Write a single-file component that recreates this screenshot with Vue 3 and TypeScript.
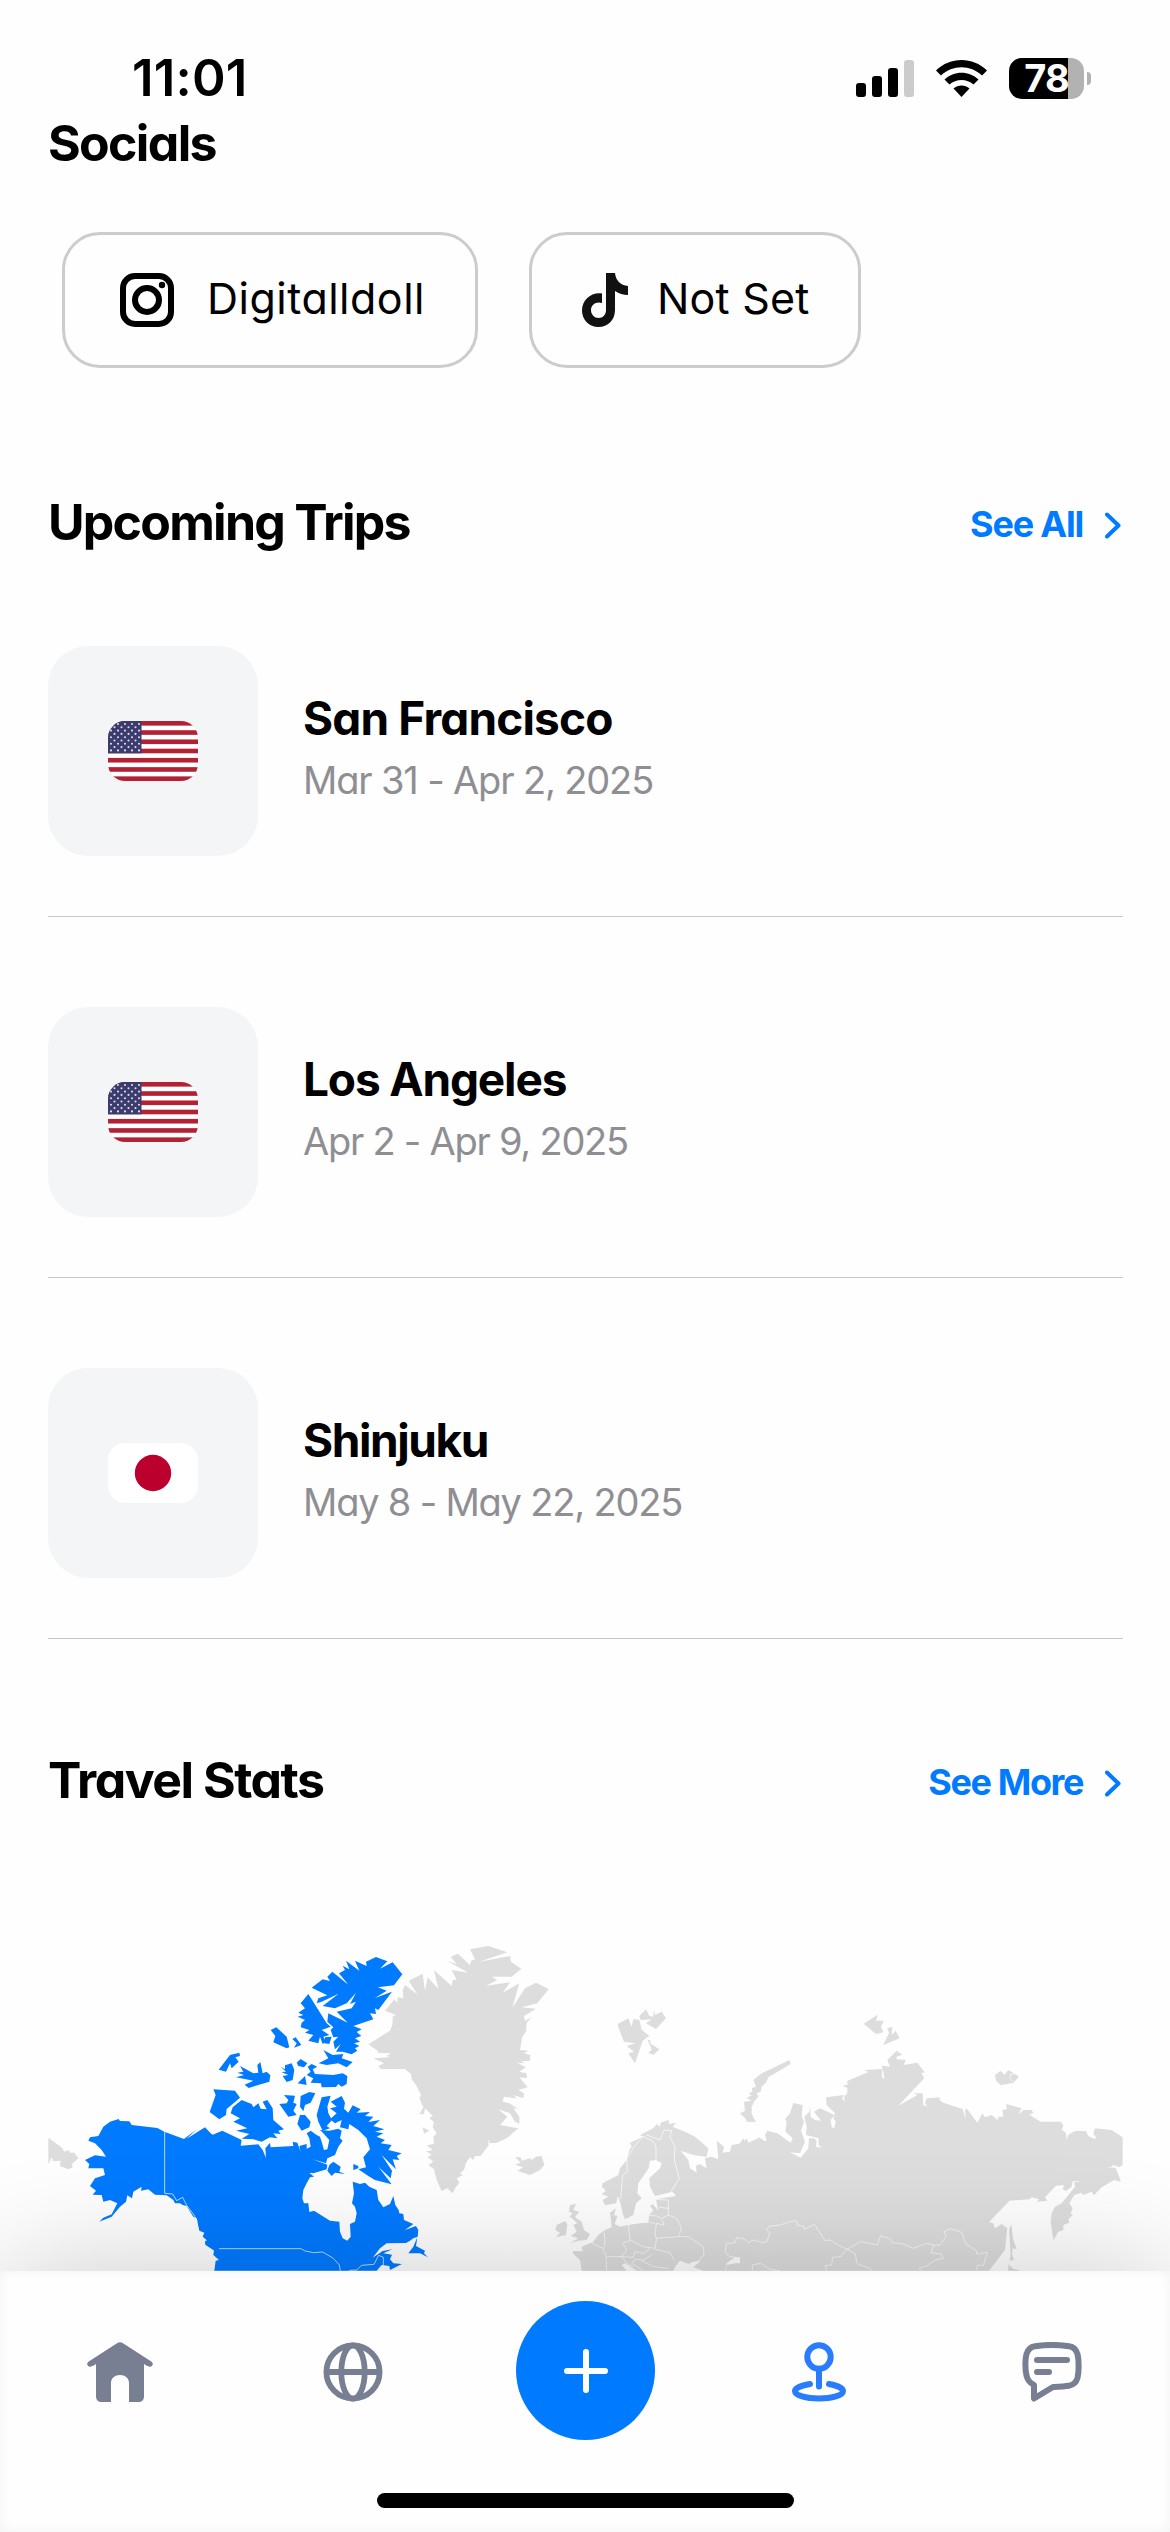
<script setup lang="ts">
interface Trip {
  id: number
  city: string
  dates: string
  country: 'us' | 'jp'
  citySpacing: string
  dateSpacing: string
}

const trips: Trip[] = [
  { id: 1, city: 'San Francisco', dates: 'Mar 31 - Apr 2, 2025', country: 'us', citySpacing: '-0.85px', dateSpacing: '-1.15px' },
  { id: 2, city: 'Los Angeles', dates: 'Apr 2 - Apr 9, 2025', country: 'us', citySpacing: '-1.15px', dateSpacing: '-1.25px' },
  { id: 3, city: 'Shinjuku', dates: 'May 8 - May 22, 2025', country: 'jp', citySpacing: '-1.4px', dateSpacing: '-1.2px' },
]

const stripes = [0, 2, 4, 6, 8, 10, 12]

const stars: { x: number; y: number }[] = []
for (let row = 0; row < 9; row++) {
  const count = row % 2 === 0 ? 5 : 4
  for (let col = 0; col < count; col++) {
    stars.push({ x: 3 + col * 7 + (row % 2 ? 3.5 : 0), y: 3 + row * 3.3 })
  }
}

// North America: coordinates are thirds of a pixel
const visited: string[] = [
  'M236 597L240 603L268 604L275 615L352 624L373 635L432 657L470 628L440 656L495 622L512 640L518 644L547 632L605 660L602 677L655 673L668 690L678 714L676 685L690 668L692 682L720 680L760 678L758 665L772 668L782 695L778 678L800 672L800 686L812 680L808 655L800 640L812 632L830 645L840 650L845 665L852 690L862 688L868 660L850 640L840 630L868 632L895 626L905 632L900 655L908 662L895 680L885 705L862 715L858 730L816 717L862 734L860 748L820 760L808 758L822 770L810 772L800 790L790 810L787 835L792 850L805 850L808 876L822 872L870 902L898 905L900 935L908 955L922 962L932 950L930 912L945 905L950 880L945 860L936 850L942 820L938 785L960 792L975 788L988 800L1010 810L1015 840L1030 862L1050 852L1060 828L1066 855L1076 870L1078 880L1090 882L1092 900L1120 912L1095 930L1128 918L1135 930L1133 950L1120 955L1110 962L1098 969L1040 970L1020 985L998 1013L1028 993L1057 988L1030 1000L1056 1004L1050 1018L1060 1030L1086 1032L1050 1050L1048 1038L1025 1035L1010 1052L523 1052L527 1022L537 1020L520 1005L522 990L495 972L500 960L488 950L493 938L478 932L470 895L460 890L440 858L428 855L420 850L405 850L400 840L380 826L345 824L325 808L303 812L305 800L280 815L276 835L262 826L258 845L240 860L215 890L178 905L190 893L215 883L232 850L210 840L190 845L185 825L158 824L168 812L150 798L165 775L195 765L190 745L145 745L148 732L135 720L165 706L198 710L185 690L165 670L145 662L150 652L175 648L190 620L210 605Z',
  'M1008 111L1042 124L1020 146L1058 127L1087 163L1062 196L1014 202L1040 212L1005 234L1056 215L1015 270L1005 265L1008 282L990 280L1000 298L940 318L965 328L950 336L964 348L945 355L960 365L942 370L958 378L945 385L952 392L935 403L908 395L888 395L902 372L885 388L880 365L895 350L880 352L872 330L880 322L862 305L865 280L923 308L890 275L935 265L948 245L930 252L948 218L920 250L885 265L848 258L896 221L845 245L830 250L835 235L862 226L815 203L848 178L870 183L862 170L877 155L925 194L897 160L915 150L908 137L928 148L918 122L958 152L945 122L980 138L978 125Z',
  'M805 222L860 310L872 320L845 330L868 345L850 350L858 365L848 372L840 350L835 370L805 362L820 345L795 338L808 330L782 322L785 308L795 300L773 290L790 285L775 278L795 265L782 250Z',
  'M692 330L709 322L740 350L748 382L740 385L700 367L706 348Z',
  'M757 357L767 352L784 375L762 383L770 370Z',
  'M855 352L875 350L868 372L853 370Z',
  'M536 449L570 405L598 398L600 408L586 412L596 425L575 445L570 430L558 455Z',
  'M600 438L640 460L655 458L652 435L661 426L668 460L680 455L691 466L688 485L626 504L614 494L640 482L588 472L612 465L592 458L610 455Z',
  'M722 440L735 448L735 436L755 430L763 450L758 480L740 486L728 468L745 465L724 456L738 455Z',
  'M770 428L782 417L802 430L792 442L775 438Z',
  'M773 490L795 468L800 495Z',
  'M803 440L815 432L832 440L818 448L825 462L880 465L908 460L922 468L920 492L905 500L895 492L888 501L845 502L843 490L812 488L820 475L800 465L812 455Z',
  'M836 430L865 415L850 390L878 405L910 402L905 415L938 426L920 442L895 430L860 435Z',
  'M520 508L585 512L600 533L560 567L558 585L538 598L509 576L527 525Z',
  'M605 540L635 552L640 562L655 550L662 566L680 568L668 545L682 540L698 565L700 600L732 628L715 632L722 642L700 640L712 655L690 652L665 665L640 658L605 656L628 642L588 632L622 625L580 605L600 595L572 580L578 562Z',
  'M732 525L765 527L760 548L770 552L760 572L770 585L745 590L718 552L740 550L745 540Z',
  'M782 528L808 516L826 520L812 548L795 555L790 574L780 560Z',
  'M845 532L872 527L862 560L865 580L876 600L860 618L870 625L848 632L835 605L830 585Z',
  'M780 585L795 585L812 605L808 622L785 632L772 612Z',
  'M872 545L905 528L915 548L912 566L925 578L938 556L962 568L950 578L990 576L975 588L1000 590L985 606L1020 600L1000 618L1033 628L1005 635L1030 640L1010 650L1035 660L1022 670L1055 675L1045 690L1085 700L1070 708L1078 720L1058 718L1068 748L1025 705L1056 752L1052 775L1015 740L1055 793L1005 780L985 768L955 748L978 742L970 712L990 688L980 655L955 630L928 612L925 628L900 622L905 600L885 610L870 598L890 580L870 565L890 560Z',
  'M868 735L880 725L902 740L898 755L915 762L885 758L875 768L862 752Z',
  'M940 732L955 738L955 745L940 750Z',
  'M1132 952L1128 978L1155 992L1152 1000L1164 1012L1140 1000L1105 1000L1120 980Z',
  'M495 962L520 968L540 990L538 1008L520 990L497 975Z',
]

const visitedBorders: string[] = [
  'M374 635V820L398 822L410 842L428 832L440 856L462 885L472 905',
  'M537 986H783L795 993L820 998L848 996L880 1015L898 1035L901 1052',
  'M928 1051L950 1050L965 1036L1002 1033L1016 1006L1030 1012V1038',
]

const westLand = 'M25 653L68 685L72 695L85 690L92 698L103 698L115 715L95 733L98 742L85 748L60 738L62 722L40 724L35 712L25 733Z'

// Greenland, Iceland, the British Isles and Europe
const atlanticLand: string[] = [
  'M385 78L442 97L358 125L450 108L453 125L484 146L455 170L395 170L412 180L378 197L450 187L428 218L478 190L457 263L495 205L528 188L566 207L532 250L485 262L528 266L492 288L495 302L515 292L500 308L498 335L487 350L480 390L505 392L492 400L511 405L510 422L482 424L495 430L472 428L497 442L478 455L500 460L500 475L478 472L503 502L475 510L492 520L490 535L460 525L470 535L432 530L428 545L448 550L475 568L460 565L478 590L478 612L465 605L450 580L415 568L442 590L420 615L475 625L440 655L410 668L390 670L385 658L386 676L362 708L345 708L340 720L330 712L318 728L312 750L300 760L308 765L290 775L298 788L288 800L278 820L262 805L245 813L230 780L222 748L205 735L220 725L203 712L215 704L198 694L218 690L200 676L222 672L220 650L230 640L218 622L222 606L208 595L218 588L195 565L192 582L178 583L190 562L178 535L183 525L170 498L155 478L153 462L134 447L62 447L55 438L72 430L40 415L90 412L80 408L92 400L52 398L55 394L25 373L90 332L97 315L98 290L108 285L75 272L103 238L112 248L113 232L130 235L128 210L135 195L172 223L146 182L188 161L195 212L203 172L235 206L222 150L275 198L278 180L290 180L275 150L325 158L262 123L290 132L272 110L294 101L330 136L333 122L345 118L330 88Z',
  'M188 622L208 632L192 641Z',
  'M466 712L482 712L485 722L510 715L515 720L528 710L545 708L553 735L540 750L510 765L472 752L490 742L465 734L482 728Z',
  'M630 855L648 852L640 870L658 875L645 892L665 905L672 930L690 942L680 960L655 962L630 970L655 955L632 948L650 935L640 915L652 910L636 895L628 890L638 880L627 875Z',
  'M590 915L615 903L622 912L618 945L588 952L600 938L586 930Z',
  'M773 312L805 295L815 320L820 297L838 300L845 330L868 347L848 362L825 430L805 400L822 395L800 378L825 370L792 365L778 330Z',
  'M838 288L858 268L868 288L880 290L882 268L885 285L905 275L918 295L888 327L858 310L875 298L842 300Z',
  'M862 358L872 362L870 370L898 388L880 405L865 398L875 390L872 380Z',
  'M925 600L928 612L948 608L938 620L975 635L1005 650L1045 685L1040 710L1000 705L962 692L985 720L990 745L1010 758L1008 738L1018 732L1040 745L1035 715L1055 710L1075 718L1070 662L1092 680L1088 698L1110 695L1115 675L1150 668L1160 655L1165 668L1200 652V1052H1098L1100 1035L1125 1030L1150 1030L1148 1012L1125 1012L1100 1030L1096 1052H1030L1000 1042L1022 1022L1000 1025L985 1032L960 1022L945 1040L940 1052H830L812 1040L795 1030L785 1035L800 1052H665L660 1020L638 1000L640 993L668 994L665 980L700 965L715 945L735 930L755 922L752 890L750 878L768 865L762 885L772 888L764 912L780 920L805 915L840 910L865 908L868 885L880 870L870 858L878 852L895 872L888 838L925 832L948 828L938 815L885 828L870 800L868 775L900 745L905 730L888 720L870 722L866 745L835 790L832 820L845 835L828 850L820 885L795 898L788 880L782 852L774 828L768 850L735 856L728 840L745 830L725 822L738 812L725 800L728 790L775 765L780 745L800 720L808 690L815 680L810 668L850 650L840 645L880 625L890 612L900 620L902 608Z',
]

const europeBorders: string[] = [
  'M782 838L788 765L802 755L800 715L830 670L852 650L880 665L888 680V722',
  'M860 645L900 660L912 630L935 632L930 650L945 680L943 720L958 775L930 820',
  'M888 838L925 840V885L905 895L890 888L868 886',
  'M898 862L925 865M925 885L950 895L965 925L955 950L888 955L885 935L890 910L912 915L905 895',
  'M885 912L868 905M805 915L810 960L850 980L885 985L890 955',
  'M732 935L735 965L730 990L740 1010L785 1010L800 990L788 970L810 962',
  'M690 965L720 982L730 985M785 1010L820 1012L825 995L850 1000L870 985',
  'M955 950L985 950L1030 980L1032 1005L1015 1022M875 1005L850 1020L825 1018L815 1030L850 1052',
  'M885 988L930 998L942 1020M845 1022L880 1040L925 1045M738 1010L740 1052M785 1010L800 1030L820 1040',
  'M1128 1012L1108 1010L1095 995L1100 970L1125 968L1130 952L1165 965L1170 955L1200 955',
]

// Northern Asia
const asiaLand: string[] = [
  'M0 668L10 655L18 668L28 670L65 655L70 662L80 662L75 645L82 632L112 640L152 668L158 655L136 635L140 605L135 598L150 580L160 549L188 555L185 590L192 605L183 632L195 665L180 700L150 697L182 713L205 685L207 655L222 655L230 662L228 680L245 683L236 675L235 655L198 645L200 620L193 590L208 575L210 557L212 590L225 600L243 602L222 575L240 565L283 585L272 600L275 622L282 625L287 605L280 595L285 580L260 555L258 532L312 525L306 535L315 547L312 530L322 520L322 505L308 495L322 495L322 483L385 456L372 450L427 447L425 470L433 478L430 455L425 437L450 440L442 420L470 392L487 404L470 410L470 418L498 420L490 435L532 428L555 458L543 458L553 475L475 557L532 525L520 520L548 520L550 555L563 560L555 550L560 535L600 532L598 540L610 548L668 567L677 598L675 568L682 568L712 608L727 580L735 592L755 585L773 600L775 590L790 590L787 570L800 568L798 552L845 565L835 582L852 570L875 570L880 578L868 584L902 605L962 605L970 615L966 630L978 638L980 660L984 645L1005 633L1038 633L1045 648L1065 657L1068 652L1060 642L1065 625L1115 630L1148 652V735L1138 742L1120 735L1115 740L1098 742L1127 743L1143 785L1122 780L1085 802L1062 826L1055 815L1028 825L1025 818L1003 825L988 850L998 865L992 880L998 885L985 898L988 908L970 915L970 930L955 935L940 960L932 905L935 880L945 860L965 850L1005 800L1003 787L1025 784L998 784L995 800L978 813L968 808L972 795L948 797L915 832L922 842L890 845L897 838L875 832L868 838L808 842L747 907L760 910L765 925L785 912L802 925L795 990L747 1052H0Z',
  'M814 913L820 960L830 988L818 985L816 1005L822 1020L810 1022L812 1000L807 930Z',
  'M805 1033L820 1047L837 1050V1052H805Z',
  'M148 420L152 432L85 472L78 488L65 500L62 515L50 520L55 530L42 545L35 560L35 582L48 606L20 605L18 598L0 580L15 572L12 545L35 542L20 535L35 525L25 520L38 515L35 505L48 500L40 480L65 460Z',
  'M371 311L413 284L408 302L431 302L423 320L430 337L408 342Z',
  'M442 325L457 320L455 345L467 332L479 355L429 376L447 340Z',
  'M765 465L782 452L793 465L805 450L837 470L820 488L783 496L768 482Z',
]

const asiaBorders: string[] = [
  'M0 953L15 958L25 968L40 960L65 968L80 965L90 940L80 930L88 918L120 915L160 902L172 905V916L192 918V928L224 913L255 962L270 960L300 978L322 988L362 965L412 975L422 947L452 957L455 968L485 971L520 985L560 970L582 976L600 975L618 950L612 935L630 926L665 937L678 972L710 993V1002L742 997L730 1037L712 1035L710 1052',
  'M322 988L345 1000L352 1032L390 1045L395 1052M322 985L302 1010L278 1012L275 1035L255 1037L260 1052',
  'M582 976L573 998L603 1002L610 1015L585 1020L560 1038L538 1045L542 1052',
  'M37 1052V1035L62 1030L90 1048L120 1052M822 462L812 462L810 475L818 484',
]
</script>

<template>
  <div class="screen">
    <header class="status-bar">
      <span class="clock">11:01</span>
      <div class="status-icons">
        <svg class="signal" viewBox="0 0 58 37">
          <rect x="0" y="23" width="10" height="14" rx="3" />
          <rect x="16" y="16" width="10" height="21" rx="3" />
          <rect x="32" y="8" width="10" height="29" rx="3" />
          <rect x="48" y="0" width="10" height="37" rx="3" fill="#ccc" />
        </svg>
        <svg class="wifi" viewBox="0 0 51 37">
          <path d="M0 10.5C14-3.5 37-3.5 51 10.5L46 15.5C34.500 4.500 16.500 4.500 5 15.500Z" />
          <path d="M8.500 19.500C18 10.500 33 10.500 42.500 19.500L37.500 24.500C31 18.500 20 18.500 13.500 24.500Z" />
          <path d="M17.500 28.500C22 24.500 29 24.500 33.500 28.500L25.500 37Z" />
        </svg>
        <div class="battery">
          <div class="battery-body"><span>78</span></div>
          <div class="battery-tip"></div>
        </div>
      </div>
    </header>

    <main>
      <h2 class="title socials-title">Socials</h2>
      <div class="socials">
        <button class="social instagram">
          <svg viewBox="0 0 54 54" width="54" height="54" fill="none" stroke="#000" stroke-width="6">
            <rect x="3" y="3" width="48" height="48" rx="12" />
            <circle cx="27" cy="27" r="12" />
            <circle cx="42" cy="12" r="3.200" fill="#000" stroke="none" />
          </svg>
          <span>Digitalldoll</span>
        </button>
        <button class="social tiktok">
          <svg viewBox="0 0 46 54" width="46" height="54">
            <path fill="#111" d="M24 0H33C33.500 7 38.500 12.500 46 13V22C41 22 37 20.500 33 18V37C33 47 26 54 16.500 54C7 54 0 46.500 0 37.500C0 27 9 19 20 20.500V30C14 28 9 32 9 37C9 41.500 12.500 45 16.500 45C21 45 24 41.500 24 37Z" />
          </svg>
          <span>Not Set</span>
        </button>
      </div>

      <section class="trips">
        <div class="section-head">
          <h2 class="title trips-title">Upcoming Trips</h2>
          <a class="more"><span class="see-all">See All</span>
            <svg viewBox="0 0 16 27" width="16" height="27"><path d="M2 2.500L13.500 13.500L2 24.500" /></svg>
          </a>
        </div>
        <article v-for="trip in trips" :key="trip.id" class="trip">
          <div class="tile">
            <svg v-if="trip.country === 'us'" class="flag" viewBox="0 0 90 60">
              <rect width="90" height="60" fill="#fff" />
              <rect v-for="s in stripes" :key="s" y="0" :transform="`translate(0 ${s * 4.615})`" width="90" height="4.615" fill="#b22234" />
              <rect width="33.500" height="32.300" fill="#3c3b6e" />
              <circle v-for="(star, i) in stars" :key="i" :cx="star.x" :cy="star.y" r="1.050" fill="#dcdce8" />
            </svg>
            <svg v-else class="flag" viewBox="0 0 90 60">
              <rect width="90" height="60" fill="#fff" />
              <circle cx="45" cy="30" r="18.200" fill="#bc002d" />
            </svg>
          </div>
          <div class="trip-text">
            <h3 :style="{ letterSpacing: trip.citySpacing }">{{ trip.city }}</h3>
            <p :style="{ letterSpacing: trip.dateSpacing }">{{ trip.dates }}</p>
          </div>
        </article>
      </section>

      <section class="stats">
        <div class="section-head">
          <h2 class="title stats-title">Travel Stats</h2>
          <a class="more"><span class="see-more">See More</span>
            <svg viewBox="0 0 16 27" width="16" height="27"><path d="M2 2.500L13.500 13.500L2 24.500" /></svg>
          </a>
        </div>
        <svg class="map" viewBox="48 1920 1075 351">
          <g transform="translate(360 1920) scale(.33333)">
            <path v-for="d in atlanticLand" :key="d" :d="d" class="land" />
            <path v-for="d in europeBorders" :key="d" :d="d" class="border" />
          </g>
          <g transform="translate(740 1920) scale(.33333)">
            <path v-for="d in asiaLand" :key="d" :d="d" class="land" />
            <path v-for="d in asiaBorders" :key="d" :d="d" class="border" />
          </g>
          <g transform="translate(40 1920) scale(.33333)">
            <path :d="westLand" class="land" />
            <path v-for="d in visited" :key="d" :d="d" class="visited" />
            <path v-for="d in visitedBorders" :key="d" :d="d" class="border" />
          </g>
        </svg>
      </section>
    </main>

    <nav class="tab-bar">
      <div class="tabs">
        <a class="tab">
          <svg viewBox="0 0 66 60" width="66" height="60">
            <path fill="#787f92" d="M30 1.200C32 -.2 34 -.2 36 1.200L63.500 19C66 20.600 66.400 22 65 23.800C63.500 25.500 61.500 24.800 57 22V54C57 58 55 60 51 60H42V41C42 36 38 33 33 33C28 33 24 36 24 41V60H15C11 60 9 58 9 54V22C4.500 24.800 2.500 25.500 1 23.800C-.4 22 0 20.600 2.500 19Z" />
          </svg>
        </a>
        <a class="tab">
          <svg viewBox="0 0 60 60" width="60" height="60" fill="none" stroke="#787f92" stroke-width="5.800">
            <circle cx="30" cy="30" r="26.600" />
            <ellipse cx="30" cy="30" rx="11.700" ry="26.600" />
            <path d="M4 30H56" />
          </svg>
        </a>
        <a class="tab add">
          <svg viewBox="0 0 44 44" width="44" height="44" fill="none" stroke="#fff" stroke-width="6" stroke-linecap="round">
            <path d="M22 3V41M3 22H41" />
          </svg>
        </a>
        <a class="tab">
          <svg viewBox="0 0 54 60" width="54" height="60" fill="none" stroke="#297cfb" stroke-width="6" stroke-linecap="round">
            <circle cx="27" cy="15" r="11.700" />
            <path d="M27 27V44.500M18 42C9 43.500 3 46 3 49C3 53.500 14 56.500 27 56.500S51 53.500 51 49C51 46 45 43.500 37 42" />
          </svg>
        </a>
        <a class="tab">
          <svg viewBox="0 0 60 60" width="60" height="60" fill="none" stroke="#787f92" stroke-width="6" stroke-linecap="round" stroke-linejoin="round">
            <path d="M12 43C7 40 5.500 38 4.500 33.500C3 27 3 17 4.500 12C6 7 8.500 5 13 4.300C24 2.500 36 2.500 47 4.300C51.500 5 54 7 55.500 12C57 18 57 30 55.500 36C54 41 51.500 43 47 43.800C42 44.600 36 44.800 31 45L12 56.500Z" />
            <path d="M15 18H45M15 30H27" />
          </svg>
        </a>
      </div>
      <div class="home-indicator"></div>
    </nav>
  </div>
</template>

<style>
body {
  margin: 0;
  background: #fff;
}
</style>

<style scoped>
.screen {
  width: 1170px;
  height: 2532px;
  overflow: hidden;
  display: flex;
  flex-direction: column;
  background: #fefefe;
  color: #000;
  font-family: Inter, "Liberation Sans", sans-serif;
  font-feature-settings: "cv11";
}
.status-bar {
  height: 113px;
  box-sizing: border-box;
  padding: 48px 79px 0 132px;
  display: flex;
  justify-content: space-between;
}
.clock {
  font-size: 51px;
  line-height: 60px;
  font-weight: 600;
  letter-spacing: 0.2px;
}
.status-icons {
  height: 60px;
  display: flex;
  align-items: center;
}
.signal {
  width: 58px;
  height: 37px;
  margin-right: 22px;
}
.wifi {
  width: 51px;
  height: 37px;
  margin-right: 22px;
}
.battery {
  display: flex;
  align-items: center;
  gap: 3px;
}
.battery-body {
  width: 75px;
  height: 41px;
  border-radius: 13px;
  background: linear-gradient(90deg, #000 59px, #b2b2b2 59px);
  color: #fff;
  font-size: 38px;
  line-height: 41px;
  font-weight: 700;
  text-align: center;
  letter-spacing: -1px;
}
.battery-tip {
  width: 4px;
  height: 13px;
  border-radius: 0 5px 5px 0;
  background: #b2b2b2;
}
main {
  height: 2158px;
  flex: none;
}
.title {
  margin: 0;
  font-size: 50px;
  line-height: 60px;
  font-weight: 650;
}
.socials-title {
  padding-left: 48px;
  letter-spacing: -1.65px;
}
.trips-title {
  letter-spacing: -1.75px;
}
.stats-title {
  letter-spacing: -1.5px;
}
.socials {
  margin: 59px 0 0 62px;
  display: flex;
  gap: 51px;
}
.social {
  height: 136px;
  box-sizing: border-box;
  border: 3px solid #ccc;
  border-radius: 38px;
  background: transparent;
  padding: 0;
  display: flex;
  align-items: center;
  font: inherit;
  font-size: 43px;
  line-height: 54px;
  color: #000;
}
.social span {
  padding-bottom: 5px;
  white-space: nowrap;
}
.instagram {
  width: 416px;
  padding-left: 55px;
}
.instagram span {
  margin-left: 33px;
  letter-spacing: 0.5px;
}
.tiktok {
  width: 332px;
  padding-left: 50px;
}
.tiktok span {
  margin-left: 29px;
  letter-spacing: 0.2px;
}
.trips {
  margin-top: 124px;
}
.section-head {
  height: 60px;
  padding: 0 49px 0 48px;
  display: flex;
  align-items: center;
  justify-content: space-between;
}
.trips .section-head {
  margin-bottom: 4px;
}
.more {
  display: flex;
  align-items: center;
  gap: 22px;
  color: #007aff;
  font-size: 36px;
  line-height: 60px;
  font-weight: 650;
  padding-top: 4px;
}
.see-all {
  letter-spacing: -1.2px;
}
.see-more {
  letter-spacing: -1.4px;
}
.more svg {
  fill: none;
  stroke: #007aff;
  stroke-width: 4;
  stroke-linecap: round;
  stroke-linejoin: round;
  margin-top: 3px;
}
.trip {
  margin: 0 47px 0 48px;
  padding: 90px 0 60px;
  border-bottom: 1px solid #c6c6c8;
  display: flex;
  align-items: center;
}
.tile {
  width: 210px;
  height: 210px;
  border-radius: 40px;
  background: #f3f5f7;
  display: flex;
  align-items: center;
  justify-content: center;
}
.flag {
  width: 90px;
  height: 60px;
  border-radius: 17px;
}
.trip-text {
  margin: 0 0 9px 45px;
}
.trip-text h3 {
  margin: 0;
  font-size: 46px;
  line-height: 60px;
  font-weight: 650;
}
.trip-text p {
  margin: 7px 0 0;
  font-size: 38px;
  line-height: 50px;
  color: #8e8e93;
}
.stats {
  margin-top: 111px;
}
.map {
  display: block;
  width: 1075px;
  height: 351px;
  margin: 110px 0 0 48px;
}
.land {
  fill: #ddd;
}
.visited {
  fill: #007aff;
}
.border {
  fill: none;
  stroke: #fff;
  stroke-opacity: 0.7;
  stroke-width: 3;
}
.tab-bar {
  position: relative;
  flex: none;
  height: 261px;
  background: #fefefe;
  box-shadow: 0 0 120px rgba(0, 0, 0, 0.2), inset 0 0 12px rgba(0, 0, 0, 0.05);
}
.tabs {
  height: 202px;
  display: grid;
  grid-template-columns: repeat(5, 233px);
  padding: 0 3px;
  align-items: center;
}
.tab {
  display: flex;
  align-items: center;
  justify-content: center;
}
.add {
  width: 139px;
  height: 139px;
  margin-bottom: 3px;
  justify-self: center;
  border-radius: 50%;
  background: #007aff;
}
.home-indicator {
  width: 417px;
  height: 15px;
  border-radius: 8px;
  background: #000;
  margin: 20px auto 0;
}
</style>
